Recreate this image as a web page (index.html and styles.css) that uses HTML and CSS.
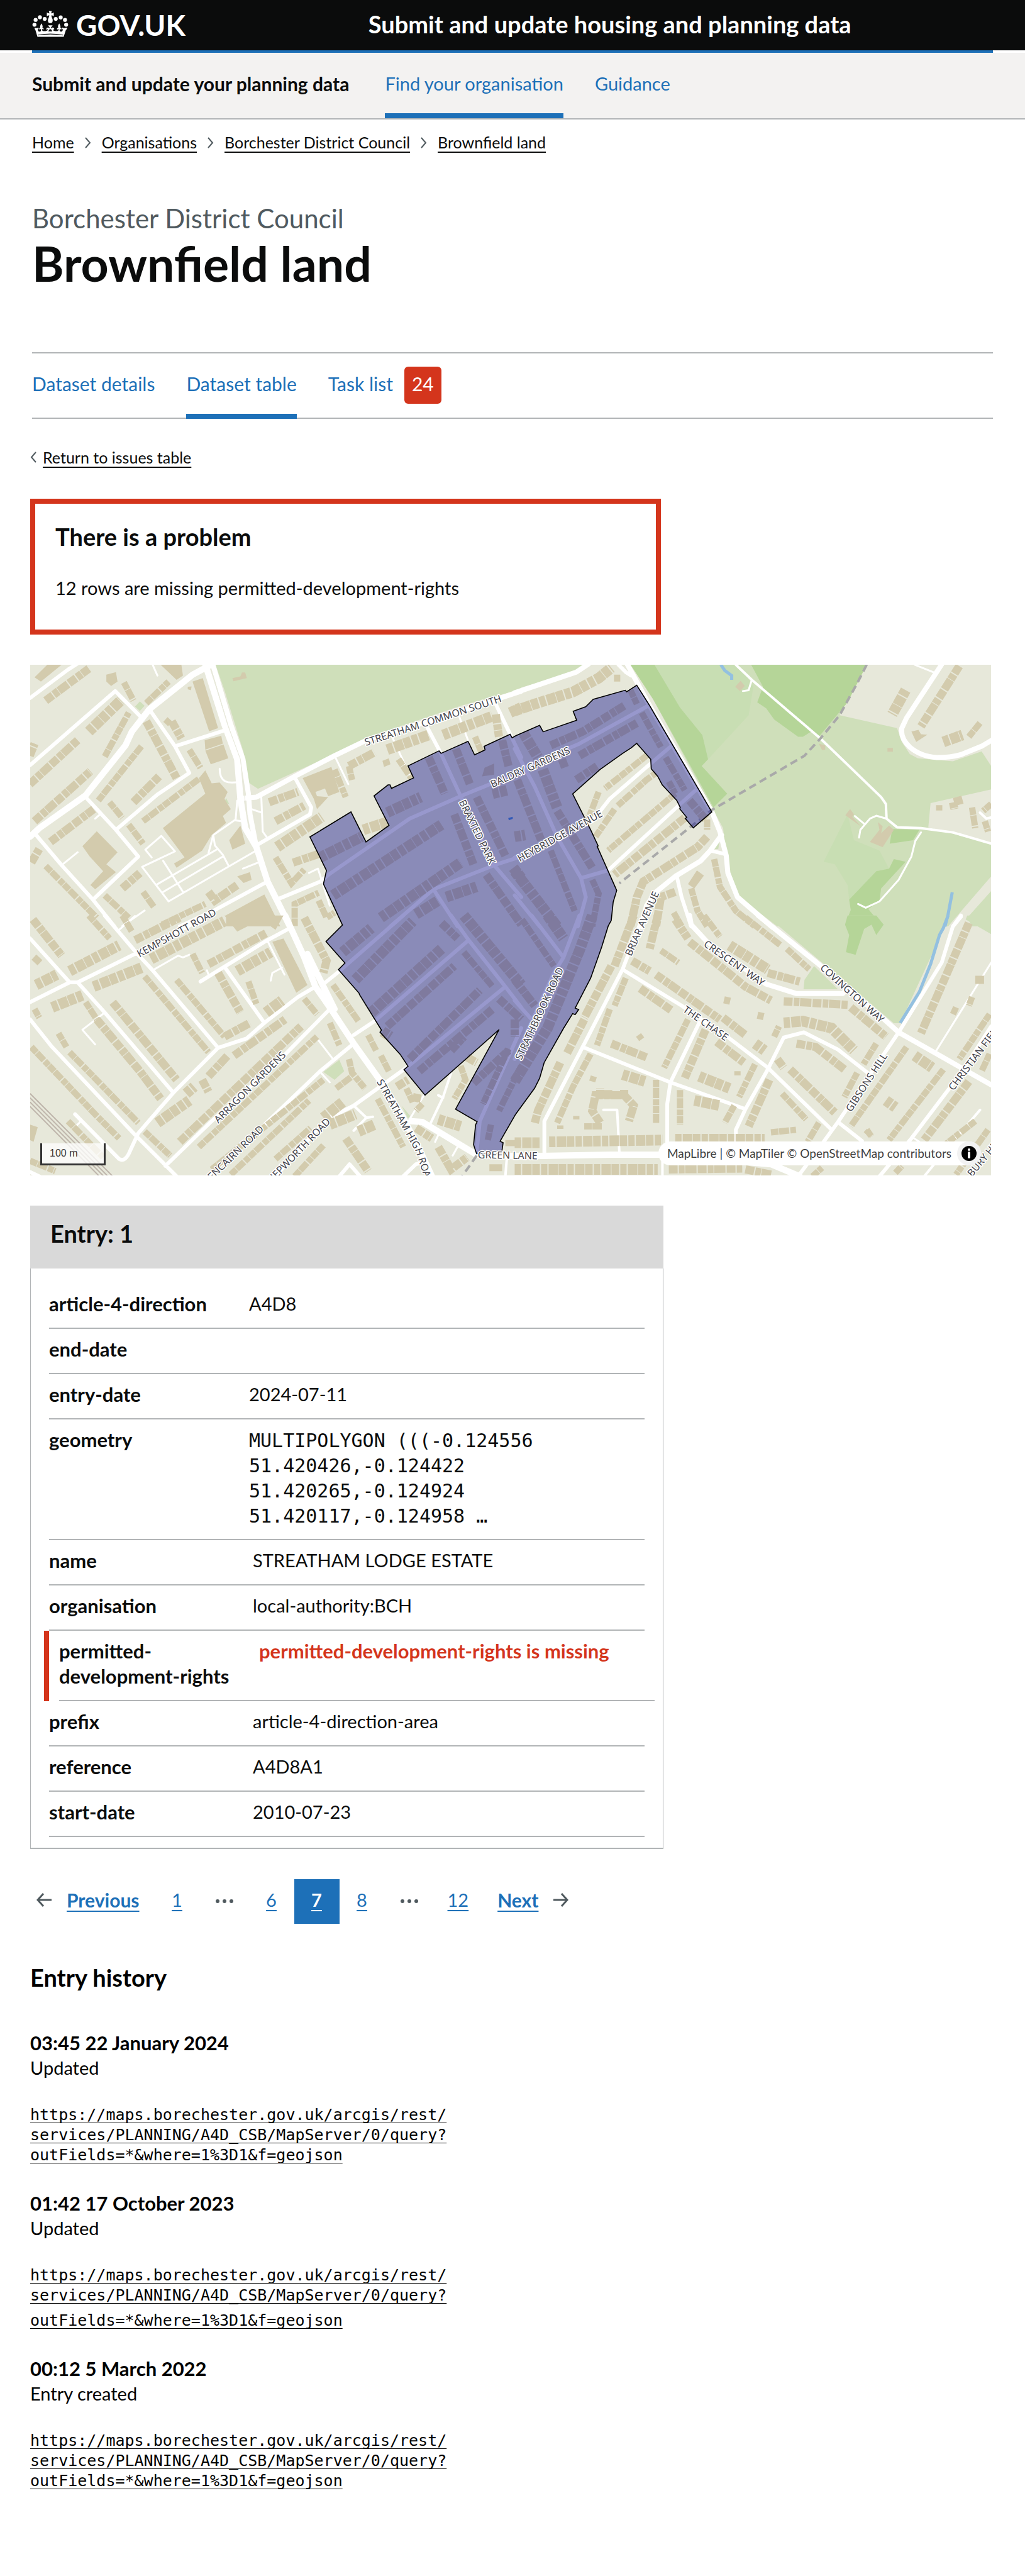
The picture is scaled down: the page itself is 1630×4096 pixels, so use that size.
FILE: index.html
```html
<!DOCTYPE html>
<html lang="en">
<head>
<meta charset="utf-8">
<meta name="viewport" content="width=device-width, initial-scale=1">
<title>Brownfield land - Borchester District Council</title>
<link rel="stylesheet" href="styles.css">
</head>
<body>
<header class="header">
  <div class="header__inner">
    <a class="logo" href="#">
      <svg class="logo__crown" viewBox="22 40 220 160" aria-hidden="true">
        <circle cx="36" cy="125" r="12"/><circle cx="43" cy="96" r="12"/><circle cx="69" cy="80" r="12"/><circle cx="98" cy="90" r="12"/>
        <circle cx="165" cy="90" r="12"/><circle cx="195" cy="81" r="12"/><circle cx="221" cy="96" r="12"/><circle cx="228" cy="125" r="12"/>
        <path d="M123 42H141L137 56Q146 56 153 50V74Q146 68 138 69Q139 78 146 92Q150 115 132 115Q114 115 118 92Q125 78 126 69Q118 68 111 74V50Q118 56 127 56Z"/>
        <path d="M38 142Q48 150 58 142Q63 144 61 152Q57 150 56 154Q58 168 68 167Q78 166 75 152Q72 150 66 155Q62 144 71 143Q68 132 78 117Q89 132 84 143Q95 145 90 155Q85 150 81 153Q82 164 96 164Q112 164 118 154Q114 150 110 158Q104 144 117 142Q122 141 127 148L128 142L118 129H146L136 142L137 148Q142 141 147 142Q160 144 154 158Q150 150 146 154Q152 164 168 164Q182 164 183 153Q179 150 174 155Q169 145 180 143Q175 132 186 117Q196 132 193 143Q202 144 198 155Q192 150 189 152Q186 166 196 167Q206 168 208 154Q207 150 203 152Q201 144 206 142Q216 150 228 142Q240 146 226 158L213 198H54L42 158Q34 146 38 142ZM128 152Q122 158 120 166H144Q142 158 136 152Z"/>
        <path class="logo__band" d="M56 186Q132 172 210 186V190Q132 178 56 190Z"/>
      </svg>
      <span class="logo__text">GOV.UK</span>
    </a>
    <a class="header__service" href="#">Submit and update housing and planning data</a>
  </div>
</header>
<div class="header-bar"></div>
<nav class="service-nav" aria-label="Service">
  <ul class="service-nav__list">
    <li class="service-nav__item service-nav__item--name"><a href="#">Submit and update your planning data</a></li>
    <li class="service-nav__item service-nav__item--current"><a href="#">Find your organisation</a></li>
    <li class="service-nav__item"><a href="#">Guidance</a></li>
  </ul>
</nav>
<div class="page-head">
  <nav aria-label="Breadcrumb">
    <ol class="breadcrumbs">
      <li><a href="#">Home</a></li>
      <li><svg class="chevron" viewBox="0 0 10 18" aria-hidden="true"><path d="M1 1L8 9L1 17"/></svg><a href="#">Organisations</a></li>
      <li><svg class="chevron" viewBox="0 0 10 18" aria-hidden="true"><path d="M1 1L8 9L1 17"/></svg><a href="#">Borchester District Council</a></li>
      <li><svg class="chevron" viewBox="0 0 10 18" aria-hidden="true"><path d="M1 1L8 9L1 17"/></svg><a href="#">Brownfield land</a></li>
    </ol>
  </nav>
  <p class="caption">Borchester District Council</p>
  <h1 class="title">Brownfield land</h1>
  <nav aria-label="Dataset">
    <ul class="tabs">
      <li class="tabs__item"><a href="#">Dataset details</a></li>
      <li class="tabs__item tabs__item--current"><a href="#">Dataset table</a></li>
      <li class="tabs__item"><a href="#">Task list</a><span class="badge">24</span></li>
    </ul>
  </nav>
</div>
<main class="main">
  <div class="back"><svg class="chevron" viewBox="0 0 10 18" aria-hidden="true"><path d="M9 1L2 9L9 17"/></svg><a href="#">Return to issues table</a></div>

  <section class="problem">
    <h2>There is a problem</h2>
    <p>12 rows are missing permitted-development-rights</p>
  </section>

  <div class="map">
    <svg class="map__canvas" viewBox="0 0 1920 1020" role="img" aria-label="Map of Streatham Lodge Estate">
      <rect class="base" width="1920" height="1020"/>

      <!-- north-west -->
      <g class="tile" transform="translate(-20 -18) scale(.6378 .3444)">
        <path class="grass" d="M612 52H1570V195L1380 290L1080 480L985 570L745 772L715 735L700 560L640 200ZM375 265L390 290L375 320L360 295ZM645 825L655 860L640 850Z"/>
        <g class="road r3">
          <path d="M985 580L1028 745M1165 470L1220 690M1375 350L1405 500M625 655C625 735 650 745 690 730M720 825L680 840L675 950L605 1040L590 1145M755 800L760 1020L775 1060M725 890L757 910M675 955L700 962M412 1170L392 1125L442 1045L485 1135L382 1225L465 1425L735 1135M448 1190L510 1370M430 1325L615 1125M448 1370L635 1165M605 1040L610 1100L635 1155L652 1215M698 1235L745 1200M130 1215L180 1140M320 1568L390 1478M235 945L250 920M905 1260L933 1235L970 1450M415 52L430 115"/>
        </g>
        <g class="road r5">
          <path d="M31 245L150 80L180 45M31 635L298 205L378 355M410 325L485 525L530 680L430 805L300 1010M485 525L645 430M860 705L912 880L908 920L735 1105M205 820L300 1010L370 1165L228 1415M50 1040L130 1215L228 1415L295 1570M1277 420L1315 555L1380 815M1490 280L1535 455L1570 590M775 1310L605 1480L500 1570M810 1410L940 1310L970 1265L1220 945L1380 815L1570 670M1160 1570L1295 1355L1485 1215L1570 1165M1380 815L1485 1215L1570 1400M1295 1355L1370 1570"/>
        </g>
        <g class="road r7"><path d="M605 60L660 400L698 600L715 800L720 920L740 1110M700 827L740 820L860 700L985 580L1085 490L1350 340L1570 205"/></g>
        <g class="road r9"><path d="M31 1050L60 1000L205 810L330 520L350 440L405 310L540 110L600 50M580 50L640 400L680 600L690 830L705 1000L740 1110L775 1310L845 1570"/></g>
        <path class="gap" d="M600 90L650 400L690 600L702 800L712 950"/>
        <g class="house">
          <path d="M45 125L85 52H130L65 150ZM270 110L300 95L305 150L285 175L270 150ZM440 52H505L510 115L490 140ZM540 150L572 130L620 420L592 438ZM578 490L630 465L635 510L580 545ZM580 550L637 515L652 595L597 630ZM580 665L600 740L625 735L650 790L640 830L660 890L635 930L645 970L600 1040L570 1130L490 1230L482 1205L515 1170L447 1000L580 800L560 710ZM240 1018L305 1140L270 1210L300 1255L235 1355L220 1330L260 1250L218 1165L195 1105ZM690 985L705 1090L665 1125L655 1070ZM680 1280L720 1255L725 1300L700 1318ZM645 1505L765 1385L815 1570H645ZM885 710L975 645L1000 790L965 815L955 770L925 790L930 815L965 820L930 890L920 830ZM665 130L690 120L695 97H705L710 130L668 148ZM1455 650L1485 625V690L1447 700ZM525 180L537 178L535 200L525 195ZM1135 610L1155 595L1160 630L1140 645Z"/>
          <path class="b1" d="M325 155L355 260M265 585L340 330M245 840L380 525M530 545L565 650M395 275L465 150M340 980L385 1090M280 850L320 940M80 1220L240 1520M265 1390L340 1520M385 1370L420 1460M985 660L1020 820M1185 600L1225 710M1425 470L1445 560M800 1170L850 1320L890 1240M860 1568V1440L935 1375M935 1420L960 1520L985 1490M1030 640L1040 720M455 370L470 395M445 1560L580 1440M385 960L560 715"/>
          <path class="b2" d="M80 260L215 75M30 745L180 490M45 960L220 670M30 580L45 510M395 380L490 710M475 380L505 480M355 850L435 700M95 1080L230 890M320 1350L375 1260M590 1370L610 1420L680 1330M780 850L870 790M800 960L890 870M855 1200L935 1150M1030 640L1110 560M1280 590L1330 800M1365 540L1410 750M1360 920L1420 1210M1430 820L1520 1160M1510 490L1530 640M1490 340L1500 470M1460 1270L1570 1560M35 1200L60 1120"/>
          <path class="b3" d="M215 440L315 260M805 1110L945 935M1150 545L1280 460M1325 460L1480 350M1535 330L1570 300M940 1170L1070 1050M980 1390L1320 980M1130 1520L1380 1200M1150 910L1255 820M1335 1400L1430 1340M1240 1500L1310 1420M1545 1230L1570 1290M1480 800L1525 780M1075 1010L1150 965"/>
        </g>
        <path class="pond" d="M1529 942L1543 934V946L1531 954Z"/>
      </g>

      <!-- north-east -->
      <g class="tile" transform="translate(970 -18) scale(.6378 .3444)">
        <path class="grass" d="M-3 52H228L190 95L-3 195ZM360 52H1100L1015 345L1195 420L1210 500L1235 570L1260 595L1370 612L1460 555L1490 640V775L1300 855L1293 995L1490 1090V1280L1355 1570H820L700 1400L665 1250L650 1000L430 250ZM1490 1365L1415 1520L1430 1570H1490ZM640 1060L635 1120L610 1125Z"/>
        <path class="meadow" d="M435 52H700L745 180L730 345L603 600L585 460L515 300ZM1040 920L1060 1070L1140 1130L1170 1235L1130 1250L1045 1415L1040 1330L1000 1210L965 1195Z"/>
        <path class="wood" d="M360 52H435L515 300L585 460L603 600L583 640L663 800L620 880L560 680L430 250ZM738 52H1100L1040 270L950 470L930 435L900 470H885L810 370L785 305L757 270L775 180ZM1180 1005L1265 1010L1245 1070L1172 1090ZM1185 1180L1222 1195L1145 1350L1140 1420L1105 1470L1150 1570H1030L1050 1475L1045 1415L1130 1250L1170 1235Z"/>
        <path class="water" d="M643 52L655 85L677 115V140M1368 1372L1355 1500L1345 1570"/>
        <g class="road r3"><path d="M740 140L730 200L712 205M1250 52L1315 100M1162 945L1130 928L1110 945L1080 1010L1076 1055M1063 930L1092 975M1270 1025L1252 1075L1240 1165L1200 1300L1140 1425L1097 1462L1073 1440"/></g>
        <g class="road r4"><path d="M690 52L740 140L955 480L1145 820L1160 860L1162 945L1195 995L1270 1000L1370 1025L1490 1090M1455 910L1475 945L1490 938"/></g>
        <g class="road r5"><path d="M322 52L345 95L362 115M490 520L420 630L295 830L240 960L-3 1170M570 770L510 870L290 1245L205 1290M420 285L200 510L-3 672M610 1130L655 1150M505 1280L520 1400L550 1570M-3 540L60 760L130 1050L205 1290L220 1400L195 1570M-3 1390L75 1570M1395 1515L1370 1570"/></g>
        <g class="road r7"><path d="M228 48L190 95L-3 215M350 50L385 170L420 290L615 905L640 1020L660 1160L665 1260L695 1400L805 1575M1335 50L1225 360L1210 420Q1205 480 1235 530Q1270 585 1320 590Q1370 590 1400 570L1460 525L1492 490M645 1040L610 1130L580 1190L500 1280L440 1370L410 1450L395 1570"/></g>
        <path class="boundary" d="M1100 52L1070 160L1015 345L955 480L905 580L610 900L550 990L325 1320"/>
        <g class="house">
          <path d="M705 145L718 175L703 205L688 180ZM950 510L970 520V545L960 548ZM1165 535H1182V557H1165ZM1048 890L1060 920L1055 935L1082 990L1033 925ZM1135 965L1150 990L1145 1030L1170 985L1185 1010L1150 1110L1110 1080L1140 1010ZM568 1245L590 1275L560 1350L540 1325ZM1240 440L1262 430L1270 455L1290 458L1255 500Z"/>
          <path class="b1" d="M318 110V150M360 200L380 280M395 330L455 530M260 790L225 960M320 870L410 720L440 680M410 580L280 770M500 800L290 1130M110 1130L185 1480M240 1300L260 1380L240 1570M470 590L530 780M480 730L500 800M622 1180L640 1340L690 1480L750 1570M550 1350L570 1480L600 1570M495 1490L520 1570M1420 470L1455 390M1327 867V898M1430 880L1440 1000M1470 960L1480 1020M1490 860L1465 900M600 950V1010M310 890L250 1050"/>
          <path class="b2" d="M110 520L210 440L340 290M200 580L380 390M5 720L80 1070M130 900L240 1230M190 720L255 640M600 1050L570 1110L400 1310L380 1400L360 1570M500 1370L455 1400L440 1570M530 940L310 1270M545 840L595 950M1390 60L1270 410M1400 835L1370 850L1375 890M145 600L155 650"/>
          <path class="b3" d="M-3 320L60 280L180 210L260 130L300 70M25 450L70 590M85 660L130 880M1222 200L1180 340M1340 500L1400 460M-3 1250L60 1400L130 1570M-3 1050L30 1040"/>
        </g>
      </g>

      <!-- south-west -->
      <g class="tile" transform="translate(-20 502) scale(.6378 .3444)">
        <path class="grass" d="M1000 835L1015 900L985 950L950 905ZM1195 1100L1222 1160L1215 1175Z"/>
        <path class="rail" d="M31 1030L290 1510M31 1055L275 1510M31 1080L262 1510M31 1105L248 1510"/>
        <g class="road r3"><path d="M310 80L360 0M415 315L495 230L510 240L530 225M265 560L195 660L235 745M585 315L590 340M775 145L828 340M820 300L790 330L785 375M930 710L980 830M940 905L970 965M1265 1040L1220 1180M1310 1270L1300 1310M1370 1340L1355 1390M190 1190L172 1225"/></g>
        <g class="road r4"><path d="M1350 910L1325 1050L1285 1205M1045 1100L1085 1170L1045 1245M1085 1170L1105 1165M1525 1400L1520 1510M1310 1040L1325 1055"/></g>
        <g class="road r5"><path d="M31 130L155 385M840 75L770 145L565 380M640 295L765 620M180 385L265 560L480 1025M1000 320L950 395M1000 320L1200 -3M1045 690L1110 610L1405 140M1350 -3L1405 140L1520 410L1570 530M1520 410L1210 880L1045 1100L960 1180L800 1510M1000 1510L1032 1440L1065 1510M1200 1510L1240 1440L1262 1430M31 1485L60 1510M1430 1370L1440 1190L1570 650"/></g>
        <g class="road r6"><path d="M31 500L155 385H180L365 215L590 -3M265 -3L310 95L365 215L415 315L620 765M480 1025L620 765L710 710L765 620L870 470L925 410M480 1025L370 1260L345 1360Q330 1430 310 1410L172 1150M31 600L100 760L355 1260L490 1510M970 540L800 860L600 1190L455 1450M1045 740L940 900L760 1220L590 1510"/></g>
        <g class="road r9"><path d="M830 -3L890 240L925 410L970 530L1045 740L1130 960L1200 1170L1260 1390L1290 1510M900 220L945 390L985 540M1225 1190L1260 1195L1430 1385L1570 1395"/></g>
        <path class="boundary" d="M1430 1390L1385 1510"/>
        <g class="house">
          <path d="M640 -3H825L800 80L755 20L680 90ZM790 150L825 130L900 400L865 445ZM31 1210L55 1225L42 1310L31 1300ZM1470 1440H1510V1480H1470ZM1520 1300H1570V1335H1520ZM1480 690L1470 720L1478 710Z"/>
          <path class="b1" d="M215 -3L280 130M320 -3L350 90M205 500L240 600M390 350L590 790M490 370L640 700M120 680L145 760M35 760L240 1160L310 1290M155 790L370 1200M540 220L570 330M980 400L1060 610M890 480L930 570M600 1470L950 950M660 1500L905 1070M1030 830L1040 910L1080 1000M990 1000L1040 930M1090 690L1115 780M1130 810L1155 900M560 1340L930 700M390 1250L470 1390M150 1190L260 1400M31 1420L110 1480M800 1410L910 1230M860 1510L950 1330M1120 1060L1200 1340M1380 870L1395 950L1360 1060M1230 1080L1210 1000M1260 1090L1240 1130M715 380L740 510M1390 210L1480 410M1530 770L1450 1090M1475 1210L1465 1300M1570 870L1500 1130M45 540L60 590M970 620L1000 750"/>
          <path class="b2" d="M40 20L130 230M360 140L500 10M290 500L490 950M240 600L375 900L440 1060M590 280L770 100M670 810L830 600M590 930L650 810M500 1310L880 640M640 700L720 620M570 950L590 1020M890 10L960 260L950 330M1240 1230L1290 1290M1020 1290L1090 1480M1320 40L1370 130M1150 640L1360 290M1220 830L1440 430M1250 900L1480 540M1500 480L1570 600M1420 970L1530 780M1310 1340L1350 1470L1400 1400M1180 990L1215 950M1230 1050L1255 1060M1400 820L1430 850M45 270L60 240M620 330L690 560M1350 780L1390 700"/>
          <path class="b3" d="M155 320L310 170M50 400L115 340M100 530L195 460M230 410L380 300M410 250L640 30M680 320L785 210M770 560L820 490M430 1200L530 1070M520 1030L545 990M950 1170L1010 1080M970 1210L1050 1150M1060 1250L1110 1210M1310 1180L1380 1220M1010 210L1100 70M1050 370L1230 30M1100 560L1320 190M1390 -3L1570 400M1135 670L1160 700"/>
        </g>
      </g>

      <!-- south-east -->
      <g class="tile" transform="translate(970 502) scale(.6378 .3444)">
        <path class="grass" d="M785 -3H1355L1335 100L1205 622H1185ZM935 290L1010 425H902L905 370ZM1415 -3H1490V105L1410 20Z"/>
        <path class="wood" d="M1040 -3H1130L1153 50L1130 110L1115 50L1092 75L1065 225L1035 210L1045 110L1032 50Z"/>
        <path class="water" d="M1355 -3L1340 70L1328 110L1300 280L1265 440L1205 620"/>
        <g class="road r3"><path d="M1490 270L1315 790M1240 1280L1265 1310"/></g>
        <g class="road r4"><path d="M1455 1125L1370 1310L1280 1510M325 1370L318 1125H275M460 1385V1510"/></g>
        <g class="road r5"><path d="M210 760L485 965L720 1120M575 620L485 965L475 1090V1385M1110 920L1010 775L903 675L840 705L790 890L720 1120L690 1240V1400M1490 640L1400 900L1240 1290L1140 1510M200 -3L150 240L120 330L-3 830M50 -3L150 240M-3 490L60 620"/></g>
        <g class="road r6"><path d="M400 -3L335 310L210 760L90 1190V1380M335 310L520 520L670 710L790 880L990 1240M1010 1195L1085 1305M1395 -3L1370 60L1335 270L1200 675L1110 920L1010 1195L965 1310L885 1510"/></g>
        <g class="road r7"><path d="M545 -3L550 50L600 150L785 395L880 450H1025L1040 420M760 -3L950 280L1155 600L1200 675L1310 790L1490 980"/></g>
        <g class="road r9"><path d="M-3 1395L300 1385H460L800 1440L890 1510"/></g>
        <g class="house">
          <path class="b1" d="M345 360L310 520M295 540L255 750M235 800L180 990L130 1200M590 -3L640 120M720 10L830 170M850 190L920 310M540 600L465 880M750 860L700 1050M835 1030L910 1180M810 700L825 640M440 950V1200M515 1010V1210M685 1100L655 1200M215 1220H270M950 1200L915 1310M1130 740L1090 860M1070 910L1030 1050M1340 890L1170 1300M1485 570L1390 830M1485 800L1460 900M1225 760L1050 1220M1480 1240L1380 1500M1440 1190L1350 1320M1190 1490L1210 1450M930 1510L960 1460M1100 1240L1115 1280M245 930L240 960M385 690L395 715M665 470L660 510M770 560L765 600M695 900V925M800 1255L880 1240M20 20L120 290M455 200L510 270M1430 470L1420 520M1380 530L1370 570M140 1215V1235M190 1160V1180"/>
          <path class="b2" d="M370 -3L310 290M300 290L215 590M215 600L160 800M140 850L70 1130L60 1200M445 -3L420 190M365 260L420 320M440 340L640 600M390 420L490 550M500 20L540 130M545 150L720 410L800 490M840 495L1040 515M790 330L890 380M1050 530L1160 700M650 590L720 690M595 660L530 940M300 740L410 820M630 730L715 850M795 950L730 1220M820 830L840 880M860 890L1000 1140M880 740L940 760L1030 890M265 1200L240 1130L250 1040H340L370 1100L355 1190M265 1060V1000M290 1060V1010M340 1060V1005M1420 960L1280 1300M1420 40L1270 680M480 1470L710 1465M720 1470L800 1500M-3 370L60 520M-3 600V700M1440 370H1470M1100 1270L1110 1250"/>
          <path class="b3" d="M670 170L790 310M335 920L405 960M575 930L670 1000M840 620L900 610L990 650L1060 780M750 740L780 780M560 1070L640 1100M105 1310L460 1300M500 1295L780 1295M-3 1315H75M-3 1470H445M1250 810L1305 880M1160 1070L1190 1110M100 -3L150 130M240 -3L200 200L100 650L-3 960"/>
        </g>
      </g>

      <path class="area" d="M559 344L641 294L671 354L717 321L687 262L715 240H719L722 247L766 226L755 202L817 172L821 177L875 153L888 180L909 170L907 163L959 139L963 146L970 142L1018 121L1025 134L1092 111L1085 93L1110 84L1125 69L1189 51L1192 54L1212 41L1238 82L1362 294L1325 326L1309 307L1312 305L1298 288L1299 285L1292 271L1263 240L1254 223L1241 208L1240 189L1212 157L1201 166L1184 177L1139 209L1084 258L1120 330L1135 362L1133 363L1172 451L1165 474L1161 511L1155 522L1142 564L1120 626L1089 686L1096 689L1089 699L1084 697L1066 726L1027 795L1018 826L1008 846L970 898L939 952L945 955L942 976L892 977L886 959L890 919L893 913L850 888L937 729L789 860L747 809L755 802L739 778L699 734L702 730L658 659L657 656L616 609L629 596L591 553L624 520L586 438L592 411Z"/>

      <g class="street">
        <text transform="translate(807 118) rotate(-18)">STREATHAM COMMON SOUTH</text>
        <text transform="translate(296 542) rotate(-29)">KEMPSHOTT ROAD</text>
        <text transform="translate(1002 211) rotate(-24)">BALDRY GARDENS</text>
        <text transform="translate(887 337) rotate(64)">BRAXTED PARK</text>
        <text transform="translate(1062 348) rotate(-29)">HEYBRIDGE AVENUE</text>
        <text transform="translate(1229 520) rotate(-66)">BRIAR AVENUE</text>
        <text transform="translate(1403 602) rotate(35)">CRESCENT WAY</text>
        <text transform="translate(1638 662) rotate(42)">COVINGTON WAY</text>
        <text transform="translate(1346 722) rotate(35)">THE CHASE</text>
        <text transform="translate(1024 700) rotate(-65)">STRATHBROOK ROAD</text>
        <text transform="translate(1677 838) rotate(-57)">GIBSONS HILL</text>
        <text transform="translate(444 849) rotate(-45)">ARRAGON GARDENS</text>
        <text class="street--start" transform="translate(1845 852) rotate(-53)">CHRISTIAN FIELDS</text>
        <text class="street--start" transform="translate(1882 1024) rotate(-50)">BURY HILL</text>
        <text class="street--end" transform="translate(468 929) rotate(-44)">GLENCAIRN ROAD</text>
        <text class="street--end" transform="translate(601 914) rotate(-46)">HEPWORTH ROAD</text>
        <path id="high-road" class="guide" d="M692 833L738 915L770 972L786 1020L800 1090"/>
        <text class="street--start"><textPath href="#high-road">STREATHAM HIGH ROAD</textPath></text>
        <text transform="translate(954 987) rotate(1)">GREEN LANE</text>
      </g>
    </svg>
    <div class="map__scale">100 m</div>
    <div class="map__credit">
      <span><a href="#">MapLibre</a> | <a href="#">© MapTiler</a> <a href="#">© OpenStreetMap contributors</a></span>
      <button class="map__info" type="button" aria-label="Toggle attribution">
        <svg viewBox="0 0 24 24" aria-hidden="true"><circle cx="12" cy="12" r="12"/><circle class="dot" cx="12" cy="6" r="2"/><path class="dot-stem" d="M12 11V18"/></svg>
      </button>
    </div>
  </div>

  <section class="card">
    <h2 class="card__title">Entry: 1</h2>
    <dl class="summary">
      <div class="summary__row"><dt>article-4-direction</dt><dd>A4D8</dd></div>
      <div class="summary__row"><dt>end-date</dt><dd></dd></div>
      <div class="summary__row"><dt>entry-date</dt><dd>2024-07-11</dd></div>
      <div class="summary__row"><dt>geometry</dt><dd class="mono">MULTIPOLYGON (((-0.124556<br>51.420426,-0.124422<br>51.420265,-0.124924<br>51.420117,-0.124958 …</dd></div>
      <div class="summary__row summary__row--wide"><dt>name</dt><dd>STREATHAM LODGE ESTATE</dd></div>
      <div class="summary__row summary__row--wide"><dt>organisation</dt><dd>local-authority:BCH</dd></div>
      <div class="summary__row summary__row--error"><dt>permitted-development-rights</dt><dd>permitted-development-rights is missing</dd></div>
      <div class="summary__row summary__row--wide"><dt>prefix</dt><dd>article-4-direction-area</dd></div>
      <div class="summary__row summary__row--wide"><dt>reference</dt><dd>A4D8A1</dd></div>
      <div class="summary__row summary__row--wide"><dt>start-date</dt><dd>2010-07-23</dd></div>
    </dl>
  </section>

  <nav aria-label="Pagination">
    <ul class="pagination">
      <li class="pagination__prev"><a href="#"><svg class="arrow" viewBox="0 0 24 22" aria-hidden="true"><path d="M11 1L2 11L11 21M2 11H24"/></svg><span>Previous</span></a></li>
      <li><a href="#"><span>1</span></a></li>
      <li class="pagination__gap"><svg class="dots" viewBox="0 0 28 6" aria-hidden="true"><circle cx="3" cy="3" r="3"/><circle cx="14" cy="3" r="3"/><circle cx="25" cy="3" r="3"/></svg></li>
      <li><a href="#"><span>6</span></a></li>
      <li class="pagination__current"><a href="#" aria-current="page"><span>7</span></a></li>
      <li><a href="#"><span>8</span></a></li>
      <li class="pagination__gap"><svg class="dots" viewBox="0 0 28 6" aria-hidden="true"><circle cx="3" cy="3" r="3"/><circle cx="14" cy="3" r="3"/><circle cx="25" cy="3" r="3"/></svg></li>
      <li><a href="#"><span>12</span></a></li>
      <li class="pagination__next"><a href="#"><span>Next</span><svg class="arrow" viewBox="0 0 24 22" aria-hidden="true"><path d="M13 1L22 11L13 21M22 11H0"/></svg></a></li>
    </ul>
  </nav>

  <section class="history">
    <h2>Entry history</h2>
    <article class="event">
      <h3>03:45 22 January 2024</h3>
      <p>Updated</p>
      <a class="event__link" href="#">https://maps.borechester.gov.uk/arcgis/rest/<br>services/PLANNING/A4D_CSB/MapServer/0/query?<br>outFields=*&amp;where=1%3D1&amp;f=geojson</a>
    </article>
    <article class="event">
      <h3>01:42 17 October 2023</h3>
      <p>Updated</p>
      <a class="event__link" href="#">https://maps.borechester.gov.uk/arcgis/rest/<br>services/PLANNING/A4D_CSB/MapServer/0/query?<span class="event__query">outFields=*&amp;where=1%3D1&amp;f=geojson</span></a>
    </article>
    <article class="event">
      <h3>00:12 5 March 2022</h3>
      <p>Entry created</p>
      <a class="event__link" href="#">https://maps.borechester.gov.uk/arcgis/rest/<br>services/PLANNING/A4D_CSB/MapServer/0/query?<br>outFields=*&amp;where=1%3D1&amp;f=geojson</a>
    </article>
  </section>
</main>
</body>
</html>
```
FILE: styles.css
```css
* { box-sizing: border-box; }

body {
  margin: 0;
  background: #fff;
  color: #0b0c0c;
  font-family: Lato, "Liberation Sans", sans-serif;
  font-size: 29px;
  line-height: 40px;
}

h1, h2, h3, p, ul, ol, dl, dd { margin: 0; padding: 0; }
ul, ol { list-style: none; }
a { color: inherit; text-decoration: none; }

/* Header */
.header { background: #0b0c0c; color: #fff; padding: 0 51px; }
.header__inner { display: flex; align-items: center; height: 80px; padding-bottom: 4px; }
.logo { display: flex; align-items: center; gap: 12px; flex: 0 0 35%; }
.logo__crown { width: 58px; height: 42px; fill: #fff; }
.logo__band { fill: #0b0c0c; }
.logo__text { font-size: 46px; font-weight: 700; line-height: 48px; padding-top: 4px; }
.header__service { font-size: 38px; font-weight: 700; }
.header-bar { height: 4px; margin: 0 51px; background: #1d70b8; }

/* Service navigation */
.service-nav { background: #f3f2f1; border-bottom: 2px solid #b1b4b6; padding: 0 51px; }
.service-nav__list { display: flex; gap: 50px; }
.service-nav__item { height: 104px; padding-top: 29px; color: #1d70b8; }
.service-nav__item--name { padding-right: 7px; color: #0b0c0c; font-size: 30px; font-weight: 700; }
.service-nav__item--current { border-bottom: 8px solid #1d70b8; }

/* Page heading */
.page-head { padding: 20px 51px 0; }
.breadcrumbs { display: flex; font-size: 25px; line-height: 32px; }
.breadcrumbs .chevron { margin: 0 17px; }
.breadcrumbs a, .back a { text-decoration: underline 2px; text-underline-offset: 5px; text-decoration-skip-ink: none; }
.chevron { width: 10px; height: 18px; fill: none; stroke: #505a5f; stroke-width: 2; }
.caption { margin-top: 81px; color: #505a5f; font-size: 42px; line-height: 48px; }
.title { margin-top: 7px; font-size: 77px; line-height: 80px; }

.tabs { display: flex; gap: 50px; margin-top: 102px; border-top: 2px solid #b1b4b6; border-bottom: 2px solid #b1b4b6; font-size: 30px; }
.tabs__item { display: flex; align-items: baseline; gap: 18px; height: 104px; margin-bottom: -2px; padding-top: 28px; color: #1d70b8; }
.tabs__item:last-child { padding-top: 21px; }
.tabs__item--current { border-bottom: 8px solid #1d70b8; }
.badge { padding: 7px 12px 12px; border-radius: 6px; background: #d4351c; color: #fff; }

/* Main column */
.main { padding: 45px 54px 135px 48px; }
.back { display: flex; align-items: center; gap: 10px; font-size: 25px; line-height: 32px; }

.problem { width: calc(66.66% - 16px); margin-top: 50px; padding: 28px 32px 46px; border: 8px solid #d4351c; }
.problem h2 { font-size: 38px; line-height: 48px; }
.problem p { margin-top: 38px; }

/* Map */
.map { position: relative; margin-top: 48px; }
.map__canvas { display: block; width: 100%; height: auto; }
.base { fill: #e7e8da; }
.grass { fill: #cfdfba; }
.meadow { fill: #c8deb3; }
.wood { fill: #b5d598; }
.pond { fill: #4a90d9; }
.tile path { vector-effect: non-scaling-stroke; }
.road path { fill: none; stroke: #fff; stroke-linejoin: round; stroke-linecap: round; }
.r3 path { stroke-width: 3px; }
.r4 path { stroke-width: 4px; }
.r5 path { stroke-width: 6px; }
.r6 path { stroke-width: 6px; }
.r7 path { stroke-width: 8px; }
.r9 path { stroke-width: 10px; }
.gap { fill: none; stroke: #e7e8da; stroke-width: 1px; }
.rail { fill: none; stroke: #bfb6ac; stroke-width: 2px; }
.water { fill: none; stroke: #93c0e0; stroke-width: 5px; }
.boundary { fill: none; stroke: #a9a9a9; stroke-width: 4px; stroke-dasharray: 12px 7px; }
.house path { fill: #d3cbad; }
.house .b1, .house .b2, .house .b3 { fill: none; stroke: #d3cbad; }
.house .b1 { stroke-width: 10px; stroke-dasharray: 12px 1px 16px 2px 9px 1px; }
.house .b2 { stroke-width: 13px; stroke-dasharray: 14px 2px 9px 1px 18px 2px; }
.house .b3 { stroke-width: 17px; stroke-dasharray: 10px 2px 15px 1px 12px 2px; }
.area { fill: rgb(17 16 139 / 43%); stroke: #000; stroke-width: 2px; }
.street text { fill: #44444c; stroke: #fff; stroke-width: 4px; stroke-linejoin: round; paint-order: stroke; font-family: "Noto Sans", sans-serif; font-size: 20px; text-anchor: middle; }
.street .street--start { text-anchor: start; }
.street .street--end { text-anchor: end; }
.guide { fill: none; }

.map__scale { position: absolute; left: 16px; bottom: 16px; width: 104px; height: 35px; padding-left: 12px; border: 3px solid #333; border-top: 0; background: rgb(255 255 255 / 75%); color: #333; font: 16px/32px "Liberation Sans", sans-serif; }
.map__credit { position: absolute; right: 16px; bottom: 16px; display: flex; align-items: center; gap: 9px; padding-left: 14px; border-radius: 19px; background: #fff; color: #404040; font-size: 19px; line-height: 38px; }
.map__info { display: flex; align-items: center; justify-content: center; width: 38px; height: 38px; padding: 0; border: 0; border-radius: 50%; background: #f2f2f2; }
.map__info svg { width: 24px; height: 24px; }
.dot { fill: #fff; }
.dot-stem { stroke: #fff; stroke-width: 4; stroke-linecap: round; }

/* Entry card */
.card { width: calc(66.66% - 12px); margin-top: 48px; border: 1px solid #b1b4b6; border-top: 0; border-bottom-width: 2px; }
.card__title { margin: 0 -1px; padding: 20px 32px 32px; background: #d9d9d9; font-size: 38px; line-height: 48px; }
.summary { padding: 24px 29px 17px; }
.summary__row { display: grid; grid-template-columns: 318px 1fr; }
.summary__row--wide { grid-template-columns: 324px 1fr; }
.summary dt, .summary dd { padding: 12px 0 18px; border-bottom: 2px solid #b1b4b6; }
.summary dt { padding-right: 30px; font-size: 31px; font-weight: 700; }
.summary__row--error { margin: 0 -16px 0 -8px; padding-left: 16px; border-left: 8px solid #d4351c; }
.summary__row--error dd { color: #d4351c; font-size: 31px; font-weight: 700; }
.summary .mono { padding: 14px 0 16px; font-family: "DejaVu Sans Mono", monospace; font-size: 30px; }

/* Pagination */
.pagination { display: flex; margin-top: 48px; color: #1d70b8; }
.pagination a { display: flex; justify-content: center; min-width: 72px; padding: 13px 24px 18px; }
.pagination a span { text-decoration: underline 2px; text-underline-offset: 5px; }
.pagination__prev a, .pagination__next a { align-items: center; gap: 24px; font-size: 30px; font-weight: 700; }
.pagination .pagination__prev a { padding-left: 10px; }
.pagination__current { background: #1d70b8; color: #fff; font-weight: 700; }
.pagination__gap { display: flex; align-items: center; padding: 0 25px; }
.pagination li:nth-child(8) a { padding: 13px 22px 18px; }
.arrow { width: 24px; height: 22px; fill: none; stroke: #505a5f; stroke-width: 3; }
.dots { width: 28px; height: 6px; fill: #505a5f; }

/* History */
.history { margin-top: 61px; color: #000; }
.history h2 { margin-bottom: 60px; font-size: 38px; line-height: 48px; }
.event { margin-bottom: 40px; }
.event:last-child { margin-bottom: 0; }
.event h3 { font-size: 31px; }
.event__link { display: block; margin-top: 39px; font-family: "DejaVu Sans Mono", monospace; font-size: 25px; line-height: 32px; text-decoration: underline 1px; text-underline-offset: 4px; text-decoration-skip-ink: none; }
.event__query { display: block; padding-top: 8px; }
```
